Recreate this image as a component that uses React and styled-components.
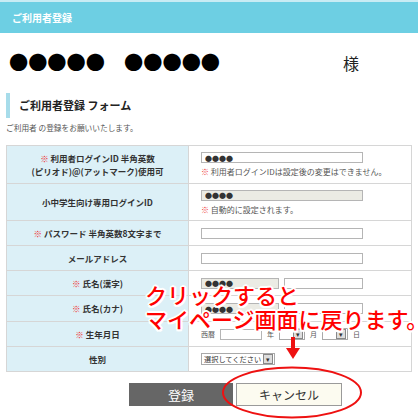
import React from 'react';
import styled, { createGlobalStyle } from 'styled-components';

const GlobalStyle = createGlobalStyle`
  html, body {
    margin: 0;
    padding: 0;
    background: #fff;
  }
  body {
    font-family: "Noto Sans CJK JP", "Noto Sans", sans-serif;
    color: #333;
  }
`;

const rows = [
  {
    label: ['利用者ログインID 半角英数', '(ピリオド)@(アットマーク)使用可'],
    required: true,
    height: 38,
    kind: 'login',
  },
  { label: ['小中学生向け専用ログインID'], height: 37, kind: 'junior' },
  { label: ['パスワード 半角英数8文字まで'], required: true, height: 25, kind: 'text' },
  { label: ['メールアドレス'], height: 25, kind: 'text' },
  { label: ['氏名(漢字)'], required: true, height: 25, kind: 'name' },
  { label: ['氏名(カナ)'], required: true, height: 26, kind: 'name' },
  { label: ['生年月日'], required: true, height: 25, kind: 'birth' },
  { label: ['性別'], height: 25, kind: 'gender' },
];

const App = () => {
  const renderField = (kind) => {
    switch (kind) {
      case 'login':
        return (
          <>
            <Field readOnly defaultValue='●●●●' $width={162} />
            <Note>
              <Mark>※</Mark> 利用者ログインIDは設定後の変更はできません。
            </Note>
          </>
        );
      case 'junior':
        return (
          <>
            <Field readOnly defaultValue='●●●●' $width={162} $locked />
            <Note>
              <Mark>※</Mark> 自動的に設定されます。
            </Note>
          </>
        );
      case 'name':
        return (
          <FieldLine>
            <Field readOnly defaultValue='●●●●' $width={78} $locked />
            <Field readOnly defaultValue='' $width={79} />
          </FieldLine>
        );
      case 'birth':
        return (
          <FieldLine>
            <Small>西暦</Small>
            <Field readOnly defaultValue='' $width={42} />
            <Small>年</Small>
            <Picker $width={26}>
              <span />
              <DropArrow>▾</DropArrow>
            </Picker>
            <Small>月</Small>
            <Picker $width={26}>
              <span />
              <DropArrow>▾</DropArrow>
            </Picker>
            <Small>日</Small>
          </FieldLine>
        );
      case 'gender':
        return (
          <Picker $width={74}>
            <span>選択してください</span>
            <DropArrow>▾</DropArrow>
          </Picker>
        );
      default:
        return <Field readOnly defaultValue='' $width={162} />;
    }
  };

  return (
    <Page>
      <GlobalStyle />
      <TopBar>ご利用者登録</TopBar>

      <NameRow>
        <Masked>●●●●●　●●●●●</Masked>
        <Sama>様</Sama>
      </NameRow>

      <FormTitle>ご利用者登録 フォーム</FormTitle>
      <Lead>ご利用者 の登録をお願いいたします。</Lead>

      <FormTable>
        <tbody>
          {rows.map((row, index) => (
            <tr key={index} style={{ height: row.height }}>
              <Label>
                {row.label.map((line, i) => (
                  <div key={i}>
                    {i === 0 && row.required && <Mark>※ </Mark>}
                    {line}
                  </div>
                ))}
              </Label>
              <Cell>{renderField(row.kind)}</Cell>
            </tr>
          ))}
        </tbody>
      </FormTable>

      <Actions>
        <SubmitButton>登録</SubmitButton>
        <CancelButton>キャンセル</CancelButton>
      </Actions>

      <Callout>
        クリックすると
        <br />
        マイページ画面に戻ります。
      </Callout>
      <Arrow width='14' height='23' viewBox='0 0 14 23'>
        <rect x='5' y='0' width='4' height='12' fill='#ee1111' />
        <polygon points='0,11 14,11 7,22' fill='#ee1111' />
      </Arrow>
      <Ring width='142' height='53' viewBox='0 0 142 53'>
        <ellipse cx='71' cy='26.5' rx='69' ry='25' fill='none' stroke='#ee1111' strokeWidth='2' />
      </Ring>
    </Page>
  );
};

const Page = styled.div`
  position: relative;
  width: 420px;
  height: 420px;
  overflow: hidden;
`;

const TopBar = styled.div`
  height: 31px;
  margin-right: 2px;
  border-top: 2px solid #c8ecf4;
  background: #6dcfe3;
  color: #fff;
  font-size: 10px;
  font-weight: 700;
  line-height: 31px;
  padding-left: 12px;
`;

const NameRow = styled.div`
  display: flex;
  align-items: center;
  height: 60px;
  padding-left: 9px;
`;

const Masked = styled.span`
  font-size: 19.2px;
  line-height: 1;
  color: #000;
`;

const Sama = styled.span`
  margin-left: auto;
  margin-right: 61px;
  font-size: 16px;
  color: #222;
`;

const FormTitle = styled.h2`
  margin: 0 0 0 6px;
  height: 25px;
  padding-left: 9px;
  border-left: 4px solid #a7dcea;
  font-size: 11px;
  font-weight: 700;
  line-height: 25px;
  color: #222;
`;

const Lead = styled.p`
  margin: 4px 0 0 6px;
  font-size: 7.7px;
  line-height: 12px;
  color: #555;
`;

const FormTable = styled.table`
  margin: 11px 0 0 6px;
  width: 406px;
  border-collapse: collapse;
  border: 1px solid #d6d6d6;
`;

const Label = styled.th`
  width: 181px;
  padding: 0;
  background: #dcf0f7;
  border: 1px solid #d6d6d6;
  font-size: 8.5px;
  font-weight: 700;
  line-height: 13px;
  color: #333;
  text-align: center;
  vertical-align: middle;
`;

const Cell = styled.td`
  padding: 0 0 0 12px;
  border: 1px solid #d6d6d6;
  vertical-align: middle;
`;

const Mark = styled.span`
  color: #ee3333;
`;

const Field = styled.input`
  display: block;
  box-sizing: border-box;
  width: ${(p) => p.$width}px;
  height: 11px;
  margin: 0;
  padding: 0 3px;
  border: 1px solid #b5b5b5;
  background: ${(p) => (p.$locked ? '#ebebe4' : '#fff')};
  font-family: inherit;
  font-size: 7px;
  line-height: 9px;
  color: #333;
  outline: none;
`;

const Note = styled.div`
  margin-top: 3px;
  font-size: 8px;
  line-height: 11px;
  color: #555;
`;

const FieldLine = styled.div`
  display: flex;
  align-items: center;
  gap: 5px;
`;

const Small = styled.span`
  font-size: 7px;
  color: #555;
`;

const Picker = styled.div`
  display: flex;
  align-items: center;
  justify-content: space-between;
  box-sizing: border-box;
  width: ${(p) => p.$width}px;
  height: 12px;
  padding-left: 2px;
  border: 1px solid #a9a9a9;
  background: #fff;
  font-size: 7.2px;
  line-height: 10px;
  color: #333;
  white-space: nowrap;
  overflow: hidden;
`;

const DropArrow = styled.span`
  flex: none;
  width: 8px;
  height: 8px;
  margin-right: 1px;
  border: 1px solid #888;
  background: #ddd;
  font-size: 7px;
  line-height: 8px;
  text-align: center;
  color: #333;
`;

const Actions = styled.div`
  display: flex;
  gap: 3px;
  margin: 11px 0 0 129px;
`;

const SubmitButton = styled.button`
  width: 104px;
  height: 23px;
  padding: 0;
  border: 0;
  background: #666;
  color: #fff;
  font-family: inherit;
  font-size: 13px;
`;

const CancelButton = styled.button`
  width: 106px;
  height: 23px;
  padding: 0;
  border: 1px solid #9a9a9a;
  background: #fcfbf0;
  color: #333;
  font-family: inherit;
  font-size: 12px;
`;

const Callout = styled.div`
  position: absolute;
  left: 145px;
  top: 282px;
  font-size: 22px;
  font-weight: 500;
  line-height: 24px;
  color: #f00;
  white-space: nowrap;
  text-shadow: 2px 0 #fff, -2px 0 #fff, 0 2px #fff, 0 -2px #fff, 1.5px 1.5px #fff,
    -1.5px 1.5px #fff, 1.5px -1.5px #fff, -1.5px -1.5px #fff;
`;

const Arrow = styled.svg`
  position: absolute;
  left: 286px;
  top: 337px;
`;

const Ring = styled.svg`
  position: absolute;
  left: 221px;
  top: 366px;
`;

export default App;
